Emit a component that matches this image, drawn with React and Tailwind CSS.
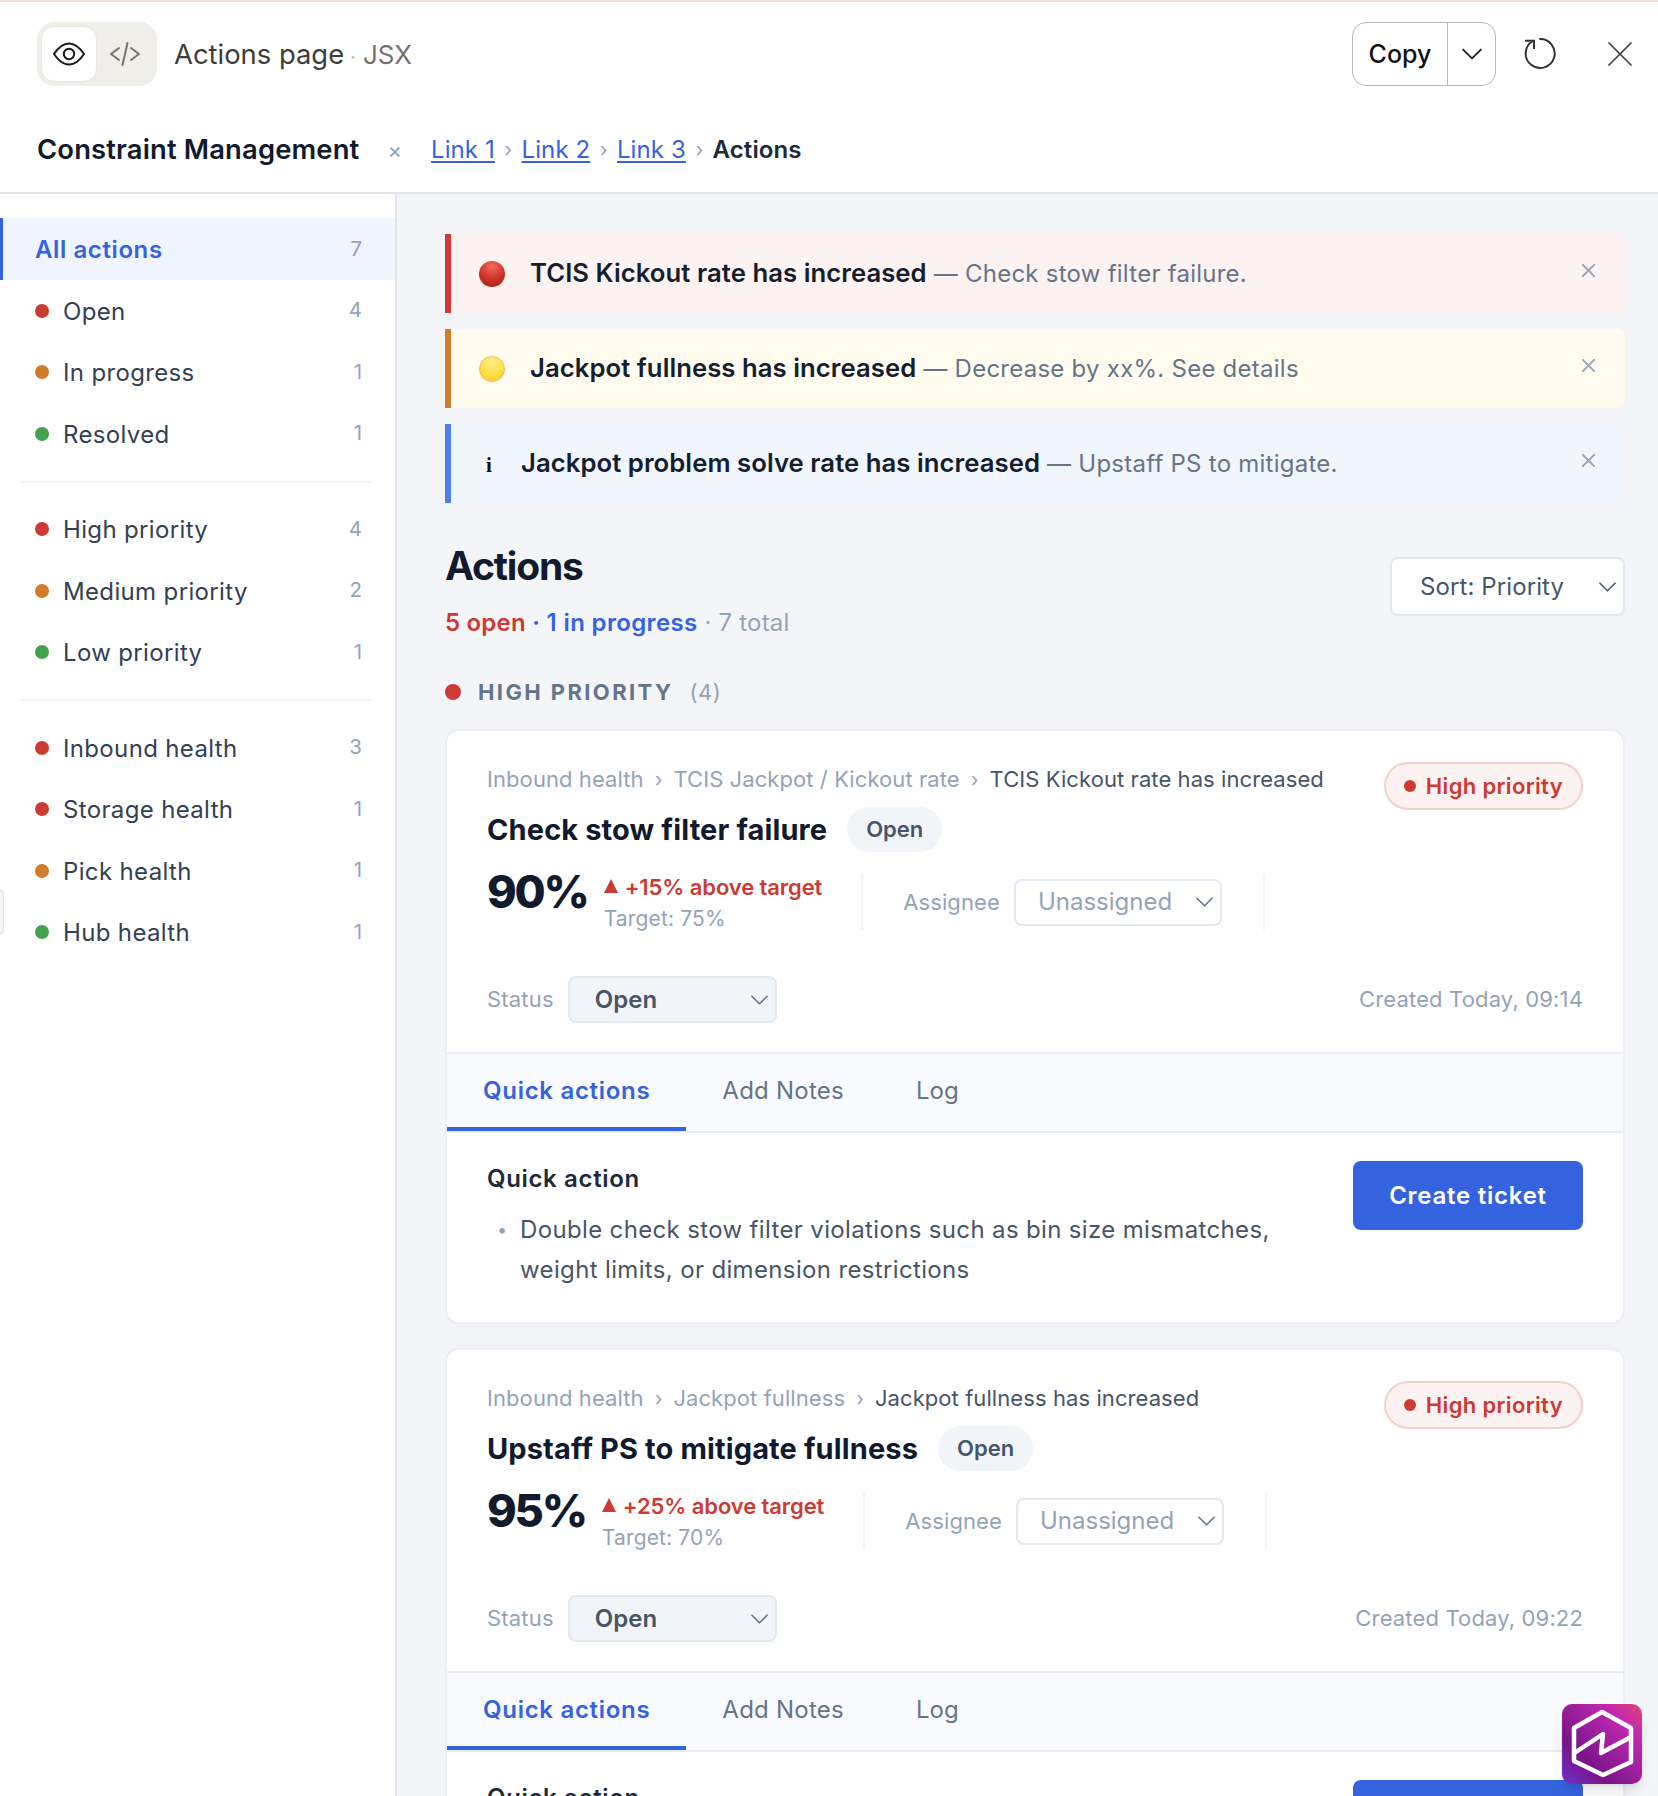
import React from "react";

const font = "font-['Inter','Liberation_Sans',sans-serif]";

const Dot = ({ color, size = "w-[14px] h-[14px]" }) => (
  <span className={`${size} ${color} rounded-full shrink-0`} />
);

const Chevron = ({ size = "w-[17px] h-[10px]", color = "#64748b" }) => (
  <svg viewBox="0 0 18 10" className={size} fill="none" stroke={color} strokeWidth="1.7" strokeLinecap="round" strokeLinejoin="round">
    <path d="M1 1 L9 9 L17 1" />
  </svg>
);

const Cross = ({ size, color, width = 2 }) => (
  <svg viewBox="0 0 24 24" className={size} fill="none" stroke={color} strokeWidth={width} strokeLinecap="round">
    <path d="M1 1 L23 23 M23 1 L1 23" />
  </svg>
);

const SideRow = ({ label, count, dot }) => (
  <div className="h-[61.5px] flex items-center pl-[35px] pr-[33px]">
    <Dot color={dot} />
    <span className="ml-[14px] pt-[2px] flex-1 text-[24px] text-[#334155] tracking-[0.35px]">{label}</span>
    <span className="text-[20.5px] text-[#94a3b8]">{count}</span>
  </div>
);

const Divider = () => <div className="h-[2px] bg-[#f1f4f9] mx-[21px] my-[16px] w-[350px]" />;

const Alert = ({ bar, bg, icon, title, text, pad = "ml-[25px]" }) => (
  <div className={`h-[79px] ${bg} border-l-[6px] ${bar} rounded-r-[8px] flex items-center pl-[28px] pr-[30px]`}>
    {icon}
    <div className={`${pad} flex-1 text-[24px] text-[#667489] tracking-[0.25px]`}>
      <span className="text-[25.7px] font-semibold text-[#151e30] tracking-[0.05px]">{title}</span> — {text}
    </div>
    <Cross size="w-[13px] h-[13px] -mt-[7px]" color="#94a3b8" width={3.4} />
  </div>
);

const Sep = ({ gap = "mx-[11px]" }) => <span className={`${gap} text-[#94a3b8] text-[20px]`}>›</span>;

const Select = ({ label, w, box, text, pl = "pl-[22px]" }) => (
  <div className={`${w} h-[47px] ${box} ${pl} border-2 border-[#e2e8f0] rounded-[8px] flex items-center justify-between pr-[7px]`}>
    <span className={`text-[24px] ${text}`}>{label}</span>
    <Chevron />
  </div>
);

const ActionCard = ({ crumbs, title, value, delta, target, created }) => (
  <div className="bg-white border-2 border-[#eceef3] rounded-[14px] overflow-hidden shrink-0">
    <div className="pt-[32px] pl-[40px] pr-[34px] pb-[29px]">
      <div className="flex justify-between items-start">
        <div>
          <div className="text-[22px] leading-[32px] text-[#94a3b8] tracking-[0.08px]">
            {crumbs[0]}
            <Sep />
            {crumbs[1]}
            <Sep />
            <span className="text-[#475569]">{crumbs[2]}</span>
          </div>
          <div className="flex items-center gap-[20px] mt-[11px]">
            <h3 className="text-[29px] font-bold text-[#111a2e] tracking-[0.12px]">{title}</h3>
            <span className="h-[45px] px-[19px] rounded-full bg-[#f1f5f9] flex items-center text-[22px] font-semibold text-[#475569]">Open</span>
          </div>
          <div className="flex items-center h-[56px] mt-[22px]">
            <div className="flex items-start h-full">
              <span className="text-[45px] leading-[36px] font-extrabold text-[#111a2e] tracking-[-2.2px]">{value}</span>
              <div className="ml-[16px] -mt-[3px]">
                <div className="flex items-center h-[32px] text-[22px] font-semibold text-[#cc3a33] tracking-[-0.1px]">
                  <svg viewBox="0 0 14 14" className="w-[14px] h-[14px] mr-[7px] -mt-[2px]"><path d="M7 0 L14 14 L0 14 Z" fill="#cc3a33" /></svg>
                  {delta}
                </div>
                <div className="text-[21px] leading-[32px] text-[#94a3b8] tracking-[0.15px]">Target: {target}</div>
              </div>
            </div>
            <div className="w-[2px] h-full bg-[#f1f5f9] ml-[39px]" />
            <span className="ml-[40px] text-[22px] text-[#94a3b8] tracking-[0.1px]">Assignee</span>
            <div className="ml-[14px]">
              <Select label="Unassigned" w="w-[208px]" box="bg-white" text="text-[#94a3b8]" />
            </div>
            <div className="w-[2px] h-full bg-[#f1f5f9] ml-[41px]" />
          </div>
        </div>
        <div className="h-[48px] px-[18px] -mt-[1px] mr-[6px] rounded-full bg-[#fdf2f2] border-2 border-[#f6cfcb] flex items-center gap-[10px] text-[22px] font-semibold text-[#cc3a33] tracking-[0.35px]">
          <Dot color="bg-[#cc3a33]" size="w-[12px] h-[12px]" />
          High priority
        </div>
      </div>
      <div className="flex items-center justify-between mt-[46px] pr-[6px]">
        <div className="flex items-center gap-[14px]">
          <span className="text-[22px] text-[#94a3b8] tracking-[0.2px]">Status</span>
          <Select label="Open" w="w-[209px]" box="bg-[#f1f5f9]" text="text-[#475569] font-semibold" pl="pl-[25px]" />
        </div>
        <span className="text-[22px] text-[#94a3b8] tracking-[0.15px]">{created}</span>
      </div>
    </div>
    <div className="flex h-[81px] bg-[#f9fafd] border-y-2 border-[#e9ebf2]">
      <div className="px-[36px] flex items-center text-[24px] font-semibold text-[#3563e0] tracking-[0.7px] border-b-4 border-[#3563e0]">Quick actions</div>
      <div className="px-[36px] pb-[3px] flex items-center text-[24px] text-[#64748b] tracking-[0.25px]">Add Notes</div>
      <div className="px-[36px] pb-[3px] flex items-center text-[24px] text-[#64748b]">Log</div>
    </div>
    <div className="flex justify-between items-start pt-[28px] pl-[40px] pr-[40px] pb-[32px]">
      <div>
        <div className="text-[24px] leading-[36px] font-semibold text-[#1e293b] tracking-[0.65px]">Quick action</div>
        <div className="flex mt-[13px] text-[24px] leading-[40px] text-[#475569] tracking-[0.35px]">
          <span className="w-[33px] pl-[10px] text-[#94a3b8] text-[18px]">•</span>
          <span className="w-[780px]">Double check stow filter violations such as bin size mismatches, weight limits, or dimension restrictions</span>
        </div>
      </div>
      <button className="w-[230px] h-[69px] bg-[#3563e0] rounded-[8px] text-white text-[24px] font-semibold tracking-[0.75px]">Create ticket</button>
    </div>
  </div>
);

const App = () => {
  return (
    <div className={`${font} relative w-[1658px] h-[1796px] overflow-hidden bg-white`}>
      <div className="h-[2px] bg-[#f0e2d8]" />
      <div className="h-[192px] pt-[20px] border-b-2 border-[#e2e4ec]">
        <div className="flex items-center h-[64px] pl-[37px] pr-[26px]">
          <div className="w-[120px] h-[64px] rounded-[18px] bg-[#f0eee8] flex items-center pl-[4px]">
            <div className="w-[56px] h-[56px] rounded-[13px] bg-white border border-[#e8e6df] flex items-center justify-center">
              <svg viewBox="0 0 32 24" className="w-[32px] h-[24px]" fill="none" stroke="#1c1c1c" strokeWidth="2" strokeLinejoin="round">
                <path d="M1 12 C6 4.5 11 1.5 16 1.5 C21 1.5 26 4.5 31 12 C26 19.5 21 22.5 16 22.5 C11 22.5 6 19.5 1 12 Z" />
                <circle cx="16" cy="12" r="5.2" />
              </svg>
            </div>
            <svg viewBox="0 0 32 26" className="w-[32px] h-[26px] ml-[12px]" fill="none" stroke="#77736c" strokeWidth="2" strokeLinecap="round" strokeLinejoin="round">
              <path d="M10 7 L2 13 L10 19" />
              <path d="M22 7 L30 13 L22 19" />
              <path d="M18.5 2 L13.5 24" />
            </svg>
          </div>
          <div className="ml-[17px] pt-[1px] flex-1 flex items-baseline text-[27.4px] text-[#3d3d3a]">
            Actions page
            <span className="ml-[6px] text-[#b8b5ad] text-[20px]">·</span>
            <span className="ml-[7px] text-[#77736c] text-[26px]">JSX</span>
          </div>
          <div className="w-[144px] h-[64px] rounded-[14px] border border-[#b8b8b8] flex">
            <div className="w-[95px] pt-[1px] flex items-center justify-center text-[25px] font-medium text-[#111] border-r border-[#b8b8b8]">Copy</div>
            <div className="flex-1 flex items-center justify-center">
              <Chevron size="w-[20px] h-[12px]" color="#222" />
            </div>
          </div>
          <svg viewBox="0 0 34 34" className="w-[34px] h-[34px] ml-[27px]" fill="none" stroke="#333" strokeWidth="2">
            <path d="M16.3 2 A14.5 14.5 0 1 1 9.8 4" />
            <path d="M2 3.7 H11 V12" />
          </svg>
          <Cross size="w-[24px] h-[24px] ml-[51px]" color="#3f3f3f" width={1.7} />
        </div>
        <div className="flex items-center h-[40px] mt-[44px] pl-[37px]">
          <span className="text-[27.4px] font-semibold text-[#111a2e] tracking-[0.15px]">Constraint Management</span>
          <span className="ml-[28px] mr-[29px] text-[22px] text-[#94a3b8]">×</span>
          <a className="text-[24px] text-[#3563e0] underline decoration-2 underline-offset-[3px] tracking-[0.1px]">Link 1</a>
          <Sep gap="mx-[9.5px]" />
          <a className="text-[24px] text-[#3563e0] underline decoration-2 underline-offset-[3px] tracking-[0.1px]">Link 2</a>
          <Sep gap="mx-[9.5px]" />
          <a className="text-[24px] text-[#3563e0] underline decoration-2 underline-offset-[3px] tracking-[0.1px]">Link 3</a>
          <Sep gap="mx-[9.5px]" />
          <span className="text-[24px] font-semibold text-[#1e293b] tracking-[0.1px]">Actions</span>
        </div>
      </div>
      <div className="flex h-[1602px]">
        <aside className="w-[397px] shrink-0 border-r-2 border-[#e2e4ec] pt-[24px]">
          <div className="h-[62px] bg-[#eff4fe] border-l-[3px] border-[#3563e0] flex items-center pl-[32px] pr-[33px]">
            <span className="pt-[2px] flex-1 text-[24px] font-semibold text-[#3563e0] tracking-[0.6px]">All actions</span>
            <span className="text-[20.5px] text-[#94a3b8]">7</span>
          </div>
          <SideRow label="Open" count="4" dot="bg-[#cc3a33]" />
          <SideRow label="In progress" count="1" dot="bg-[#cf7c2b]" />
          <SideRow label="Resolved" count="1" dot="bg-[#45a14f]" />
          <Divider />
          <SideRow label="High priority" count="4" dot="bg-[#cc3a33]" />
          <SideRow label="Medium priority" count="2" dot="bg-[#cf7c2b]" />
          <SideRow label="Low priority" count="1" dot="bg-[#45a14f]" />
          <Divider />
          <SideRow label="Inbound health" count="3" dot="bg-[#cc3a33]" />
          <SideRow label="Storage health" count="1" dot="bg-[#cc3a33]" />
          <SideRow label="Pick health" count="1" dot="bg-[#cf7c2b]" />
          <SideRow label="Hub health" count="1" dot="bg-[#45a14f]" />
        </aside>
        <main className="flex-1 bg-[#f4f5f8] pt-[40px] pl-[48px] pr-[33px] overflow-hidden">
          <div className="flex flex-col gap-[16px]">
            <Alert
              bar="border-[#cc3a33]"
              bg="bg-[#fdf2f2]"
              title="TCIS Kickout rate has increased"
              text="Check stow filter failure."
              icon={<span className="w-[26px] h-[26px] rounded-full shrink-0 bg-[radial-gradient(circle_at_50%_20%,#ee6a60,#cc3026_55%,#a3241c)]" />}
            />
            <Alert
              bar="border-[#cf7c2b]"
              bg="bg-[#fffcef]"
              title="Jackpot fullness has increased"
              text="Decrease by xx%. See details"
              icon={<span className="w-[26px] h-[26px] rounded-full shrink-0 border border-[#e8bf4c] bg-[radial-gradient(circle_at_50%_20%,#fff08a,#fdd835_70%,#f7c62f)]" />}
            />
            <Alert
              bar="border-[#4d7ff0]"
              bg="bg-[#f0f5fe]"
              title="Jackpot problem solve rate has increased"
              text="Upstaff PS to mitigate."
              pad="ml-[25px]"
              icon={<span className="w-[14px] ml-[3px] text-center font-['Liberation_Serif',serif] font-bold text-[21px] text-[#111] mt-[4px]">i</span>}
            />
          </div>
          <div className="flex justify-between items-start mt-[41px]">
            <div>
              <h1 className="text-[39px] leading-[44px] font-bold text-[#111a2e] tracking-[-1.2px]">Actions</h1>
              <div className="mt-[19px] text-[24px] leading-[32px] text-[#94a3b8] tracking-[0.2px]">
                <span className="font-semibold text-[#cc3a33]">5 open</span>
                <span className="font-semibold text-[#3563e0] tracking-[0.35px]"> · 1 in progress</span> · 7 total
              </div>
            </div>
            <div className="mt-[13px] w-[235px] h-[59px] bg-white border-2 border-[#e2e8f0] rounded-[8px] flex items-center justify-between pl-[28px] pr-[7px]">
              <span className="text-[24px] text-[#475569] tracking-[0.1px]">Sort: Priority</span>
              <Chevron color="#475569" />
            </div>
          </div>
          <div className="flex items-center h-[32px] mt-[37px]">
            <Dot color="bg-[#cc3a33]" size="w-[16px] h-[16px]" />
            <span className="ml-[17px] text-[22px] font-bold text-[#64748b] tracking-[2.4px]">HIGH PRIORITY</span>
            <span className="ml-[16px] text-[22px] text-[#94a3b8] tracking-[0.5px]">(4)</span>
          </div>
          <div className="flex flex-col gap-[24px] mt-[21px]">
            <ActionCard
              crumbs={["Inbound health", "TCIS Jackpot / Kickout rate", "TCIS Kickout rate has increased"]}
              title="Check stow filter failure"
              value="90%"
              delta="+15% above target"
              target="75%"
              created="Created Today, 09:14"
            />
            <ActionCard
              crumbs={["Inbound health", "Jackpot fullness", "Jackpot fullness has increased"]}
              title="Upstaff PS to mitigate fullness"
              value="95%"
              delta="+25% above target"
              target="70%"
              created="Created Today, 09:22"
            />
          </div>
        </main>
      </div>
      <div className="absolute left-0 top-[890px] w-[4px] h-[44px] bg-[#f7f5f1] border border-l-0 border-[#e4e1da] rounded-r-[4px]" />
      <div className="absolute left-[1562px] top-[1704px] w-[80px] h-[80px] rounded-[10px] shadow-lg bg-[linear-gradient(45deg,#6d30c8_0%,#7a1488_30%,#a020a0_55%,#c428b0_78%,#e0456a_100%)] flex items-center justify-center">
        <svg viewBox="0 0 80 80" className="w-[80px] h-[80px]" fill="none" stroke="white" strokeWidth="4.5" strokeLinejoin="round" strokeLinecap="round">
          <path d="M40 8 L69 24 V58 L41 71 L12 57 V24 Z" />
          <path d="M14 48 L41 30 L39 49 L69 33" />
        </svg>
      </div>
    </div>
  );
};

export default App;
